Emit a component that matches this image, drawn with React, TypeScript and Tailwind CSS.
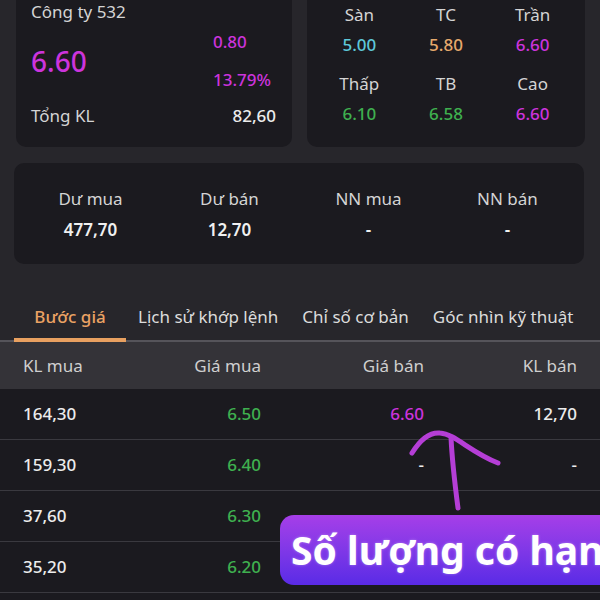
import React from "react";

const MAG = "text-[#cc34dc]";
const GREEN = "text-[#3fb04f]";

function Row({ a, b, c, d, cClass }: { a: string; b: string; c: string; d: string; cClass?: string }) {
  return (
    <div className="grid grid-cols-[120px_118px_163px_153px] px-[23px] h-[51px] items-center border-b border-[#3a393f] bg-[#1b1a1f] text-[17px]">
      <div className="text-[#ececec] font-medium">{a}</div>
      <div className={`text-right font-medium ${GREEN}`}>{b}</div>
      <div className={`text-right font-medium ${cClass ?? "text-[#ececec]"}`}>{c}</div>
      <div className="text-right text-[#ececec] font-medium">{d}</div>
    </div>
  );
}

export default function App() {
  return (
    <div
      className="relative w-[600px] h-[600px] overflow-hidden bg-[#27262b] text-[#d6d6d6]"
      style={{ fontFamily: '"Noto Sans", sans-serif' }}
    >
      {/* top cards */}
      <div className="flex gap-[15px] pl-[16px] mt-[-14px]">
        <div className="w-[276px] h-[161px] rounded-[10px] bg-[#1b1a1f] pl-[15px] pr-[16px] pt-[14px]">
          <div className="text-[17px] leading-[24px] text-[#d4d4d4]">Công ty 532</div>
          <div className="flex justify-between items-center mt-[6px]">
            <div className={`text-[28px] leading-[32px] font-medium ${MAG}`}>6.60</div>
            <div className={`flex flex-col gap-[14px] w-[63px] text-[17px] leading-[24px] font-medium ${MAG}`}>
              <div>0.80</div>
              <div>13.79%</div>
            </div>
          </div>
          <div className="flex justify-between mt-[12px] text-[17px] leading-[24px]">
            <div className="text-[#d4d4d4]">Tổng KL</div>
            <div className="text-[#ececec] font-medium">82,60</div>
          </div>
        </div>
        <div className="w-[278px] h-[161px] rounded-[10px] bg-[#1b1a1f] px-[9px] pt-[17px]">
          <div className="grid grid-cols-3 text-center text-[17px] leading-[24px] gap-y-[6px]">
            <div className="text-[#d4d4d4]">Sàn</div>
            <div className="text-[#d4d4d4]">TC</div>
            <div className="text-[#d4d4d4]">Trần</div>
            <div className="text-[#5ec8d8] font-medium">5.00</div>
            <div className="text-[#e6a96c] font-medium">5.80</div>
            <div className={`font-medium ${MAG}`}>6.60</div>
            <div className="text-[#d4d4d4] mt-[9px]">Thấp</div>
            <div className="text-[#d4d4d4] mt-[9px]">TB</div>
            <div className="text-[#d4d4d4] mt-[9px]">Cao</div>
            <div className={`font-medium ${GREEN}`}>6.10</div>
            <div className={`font-medium ${GREEN}`}>6.58</div>
            <div className={`font-medium ${MAG}`}>6.60</div>
          </div>
        </div>
      </div>

      {/* second card */}
      <div className="ml-[14px] mt-[16px] w-[570px] h-[101px] rounded-[10px] bg-[#1b1a1f] px-[7px] pt-[24px]">
        <div className="grid grid-cols-4 text-center text-[17px] leading-[24px] gap-y-[7px]">
          <div className="text-[#d4d4d4]">Dư mua</div>
          <div className="text-[#d4d4d4]">Dư bán</div>
          <div className="text-[#d4d4d4]">NN mua</div>
          <div className="text-[#d4d4d4]">NN bán</div>
          <div className="text-[#f0f0f0] font-semibold">477,70</div>
          <div className="text-[#f0f0f0] font-semibold">12,70</div>
          <div className="text-[#f0f0f0] font-semibold">-</div>
          <div className="text-[#f0f0f0] font-semibold">-</div>
        </div>
      </div>

      {/* tabs */}
      <div className="mt-[30px] h-[48px] flex items-stretch border-b-[2px] border-[#55545a] text-[17px]">
        <div className="ml-[14px] w-[112px] flex items-center justify-center border-b-[4px] border-[#e8a060] mb-[-2px] pt-[2px] text-[#eba264] font-medium">
          Bước giá
        </div>
        <div className="ml-[12px] flex items-center text-[#dcdcdc]">Lịch sử khớp lệnh</div>
        <div className="ml-[24px] flex items-center text-[#dcdcdc]">Chỉ số cơ bản</div>
        <div className="ml-[24px] flex items-center text-[#dcdcdc]">Góc nhìn kỹ thuật</div>
      </div>

      {/* header */}
      <div className="grid grid-cols-[120px_118px_163px_153px] px-[23px] h-[47px] items-center bg-[#343338] text-[17px] text-[#cfcfcf]">
        <div>KL mua</div>
        <div className="text-right">Giá mua</div>
        <div className="text-right">Giá bán</div>
        <div className="text-right">KL bán</div>
      </div>

      <Row a="164,30" b="6.50" c="6.60" d="12,70" cClass={MAG} />
      <Row a="159,30" b="6.40" c="-" d="-" />
      <Row a="37,60" b="6.30" c="" d="" />
      <Row a="35,20" b="6.20" c="" d="" />
      <div className="h-[51px] bg-[#1b1a1f]" />

      {/* hand-drawn arrow */}
      <svg className="absolute left-0 top-0" width="600" height="600" viewBox="0 0 600 600" fill="none">
        <path
          d="M412 453 C 420 440, 430 432, 440 433 C 455 434, 470 452, 498 463"
          stroke="#b53ed6"
          strokeWidth="5"
          strokeLinecap="round"
        />
        <path d="M451 437 C 452 460, 455 485, 458 508" stroke="#b53ed6" strokeWidth="5" strokeLinecap="round" />
      </svg>

      {/* sticker */}
      <div className="absolute left-[280px] top-[515px] w-[340px] h-[70px] rounded-[14px] bg-gradient-to-b from-[#a63ee8] to-[#5a2ae6] flex items-center pl-[11px] overflow-hidden">
        <span
          className="text-white font-bold text-[39px] whitespace-nowrap"
          style={{ fontFamily: '"Noto Sans", sans-serif', textShadow: "0 0 3px rgba(255,255,255,0.35)" }}
        >
          Số lượng có hạn
        </span>
      </div>
    </div>
  );
}
